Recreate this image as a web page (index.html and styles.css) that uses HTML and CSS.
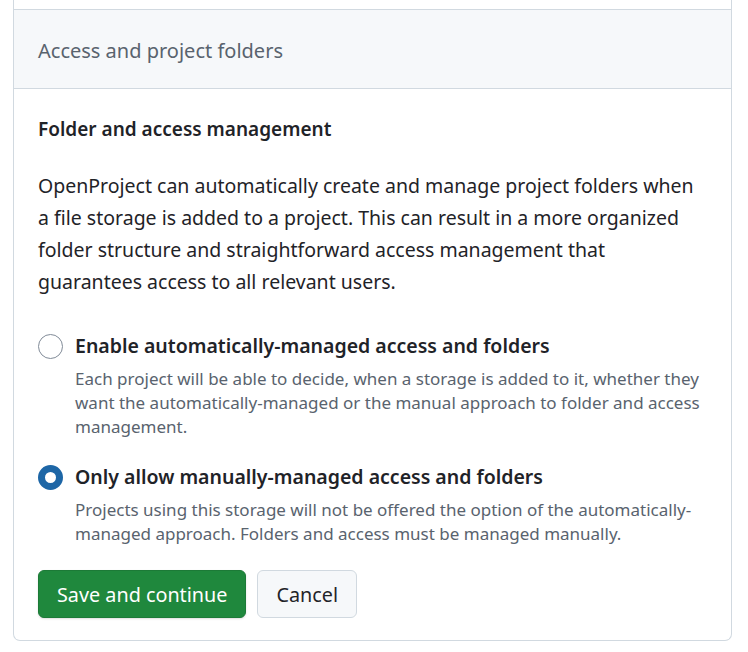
FILE: index.html
```html
<!DOCTYPE html>
<html lang="en">
<head>
    <meta charset="UTF-8">
    <meta name="viewport" content="width=device-width, initial-scale=1.0">
    <title>Access and project folders</title>
    <link rel="stylesheet" href="styles.css">
</head>
<body>
    <div class="page">
        <div class="box">
            <div class="box-row prev-row"></div>

            <div class="box-header">
                <h2>Access and project folders</h2>
            </div>

            <form class="box-body">
                <h3 class="section-title">Folder and access management</h3>
                <p class="intro">
                    OpenProject can automatically create and manage project folders when
                    a file storage is added to a project. This can result in a more organized
                    folder structure and straightforward access management that
                    guarantees access to all relevant users.
                </p>

                <div class="radio-group">
                    <label class="radio-option">
                        <input type="radio" name="management" value="automatic">
                        <span class="radio-mark"></span>
                        <span class="radio-text">
                            <span class="radio-label">Enable automatically-managed access and folders</span>
                            <span class="radio-caption">Each project will be able to decide, when a storage is added to it, whether they want the automatically-managed or the manual approach to folder and access management.</span>
                        </span>
                    </label>

                    <label class="radio-option">
                        <input type="radio" name="management" value="manual" checked>
                        <span class="radio-mark"></span>
                        <span class="radio-text">
                            <span class="radio-label">Only allow manually-managed access and folders</span>
                            <span class="radio-caption">Projects using this storage will not be offered the option of the automatically-managed approach. Folders and access must be managed manually.</span>
                        </span>
                    </label>
                </div>

                <div class="actions">
                    <button type="button" class="btn btn-primary">Save and continue</button>
                    <button type="button" class="btn">Cancel</button>
                </div>
            </form>
        </div>
    </div>
</body>
</html>
```

FILE: styles.css
```css
* {
    margin: 0;
    padding: 0;
    box-sizing: border-box;
}

body {
    font-family: 'Noto Sans', 'Open Sans', sans-serif;
    color: #1f2328;
    background: #fff;
}

.page {
    padding: 0 16px 11px 13px;
}

.box {
    border: 1px solid #d1d9e0;
    border-top: none;
    border-radius: 0 0 7px 7px;
}

.prev-row {
    height: 9px;
}

.box-header {
    background-color: #f6f8fa;
    border-top: 1px solid #d1d9e0;
    border-bottom: 1px solid #d1d9e0;
    height: 80px;
    display: flex;
    align-items: center;
    padding: 2px 24px 0;
}

.box-header h2 {
    font-size: 20px;
    font-weight: 400;
    color: #59636e;
}

.box-body {
    padding: 27px 24px 22px;
}

.section-title {
    font-size: 19px;
    font-weight: 600;
    line-height: 27px;
    margin-bottom: 27px;
}

.intro {
    max-width: 660px;
    font-size: 19.5px;
    line-height: 32px;
    margin-bottom: 33px;
}

.radio-group {
    display: flex;
    flex-direction: column;
    gap: 23px;
}

.radio-option {
    display: flex;
    align-items: flex-start;
    gap: 12px;
    cursor: pointer;
}

.radio-option input {
    display: none;
}

.radio-mark {
    flex: none;
    width: 25px;
    height: 25px;
    margin-top: 3px;
    border: 1.5px solid #818b98;
    border-radius: 50%;
    background: #fff;
}

.radio-option input:checked + .radio-mark {
    border: 7px solid #1d66a6;
}

.radio-text {
    display: flex;
    flex-direction: column;
}

.radio-label {
    font-size: 19.5px;
    font-weight: 600;
    line-height: 30px;
}

.radio-caption {
    font-size: 17px;
    line-height: 24px;
    color: #59636e;
    margin-top: 6px;
}

.actions {
    display: flex;
    gap: 11px;
    margin-top: 24px;
}

.btn {
    font-family: inherit;
    font-size: 19.8px;
    height: 48px;
    padding: 0 18px;
    border-radius: 6px;
    border: 1px solid #d1d9e0;
    background-color: #f6f8fa;
    color: #1f2328;
    cursor: pointer;
}

.btn-primary {
    background-color: #1f883d;
    border-color: #1c7a37;
    color: #fff;
    box-shadow: 0 1px 2px rgba(31, 35, 40, 0.15);
}
```
